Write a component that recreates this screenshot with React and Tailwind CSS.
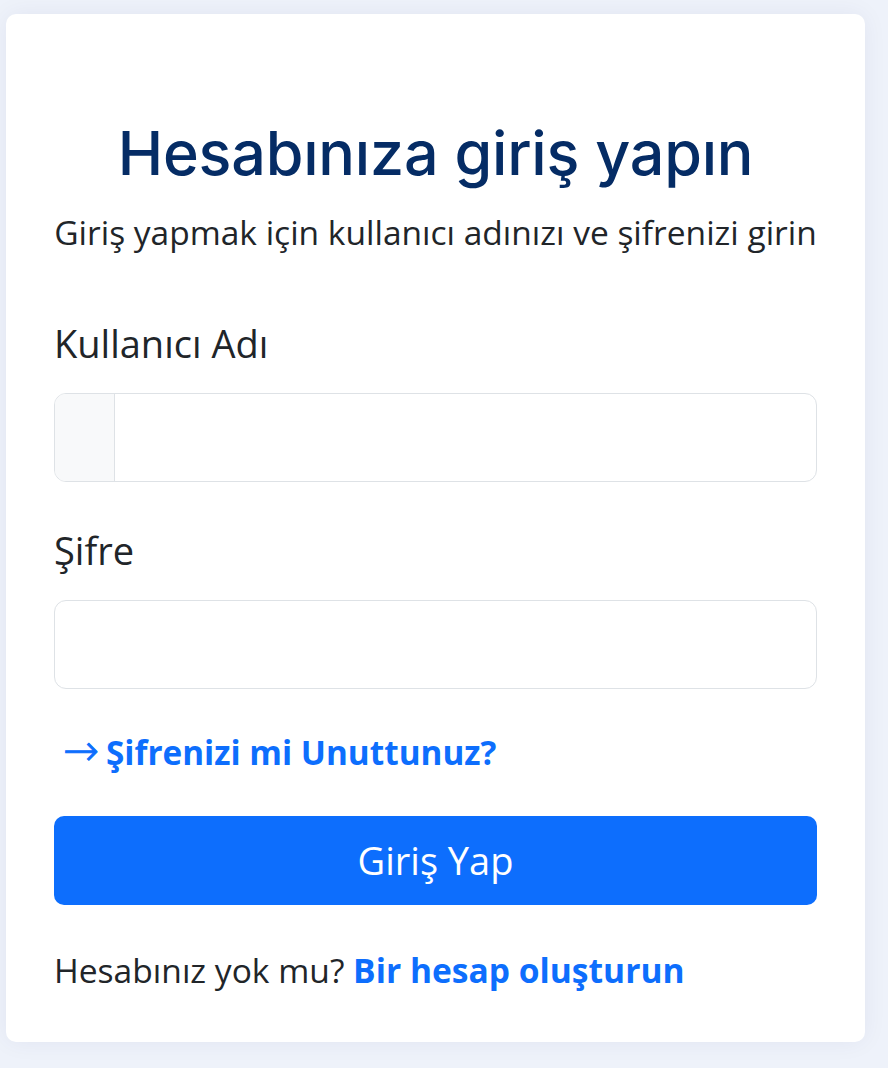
export default function App() {
  return (
    <div className="min-h-[1068px] w-full bg-[#eef2fa] pt-[14px] pl-[6px] pr-[23px] pb-[26px]" style={{ fontFamily: '"Open Sans", "Noto Sans", sans-serif' }}>
      <div className="w-[859px] rounded-[10px] bg-white shadow-[0_0_24px_rgba(20,40,100,0.06)] px-[48px] pt-[103px] pb-[47px]">
        <h1 className="text-center text-[#052c65] font-medium text-[61px] leading-[73px] tracking-[-0.2px]" style={{ fontFamily: 'Inter, "Noto Sans", sans-serif' }}>
          Hesabınıza giriş yapın
        </h1>
        <p className="mt-[17px] text-center text-[#212529] text-[33.5px] leading-[50px] whitespace-nowrap">
          Giriş yapmak için kullanıcı adınızı ve şifrenizi girin
        </p>
        <label className="block mt-[58px] text-[#212529] text-[38px] leading-[57px]">Kullanıcı Adı</label>
        <div className="mt-[21px] flex h-[89px] rounded-[12px] border-[1.5px] border-[#dee2e6] overflow-hidden">
          <div className="w-[60px] bg-[#f8f9fa] border-r-[1.5px] border-[#dee2e6]"></div>
          <input className="flex-1 outline-none px-4 text-[33px]" />
        </div>
        <label className="block mt-[40px] text-[#212529] text-[38px] leading-[57px]">Şifre</label>
        <div className="mt-[21px] h-[89px] rounded-[12px] border-[1.5px] border-[#dee2e6]">
          <input type="password" className="w-full h-full bg-transparent outline-none px-4 text-[33px]" />
        </div>
        <div className="mt-[38px] pl-[9px] text-[#0d6efd] font-bold text-[33.3px] leading-[50px] whitespace-nowrap">
          <span className="font-extralight text-[43px] leading-[43px] mr-[7px] [-webkit-text-stroke:0.9px_#0d6efd]" style={{ fontFamily: '"DejaVu Sans", sans-serif' }}>→</span>
          <span>Şifrenizi mi Unuttunuz?</span>
        </div>
        <button className="mt-[39px] w-full h-[89px] rounded-[10px] bg-[#0d6efd] text-white text-[38px] leading-[57px]">
          Giriş Yap
        </button>
        <p className="mt-[40px] text-[#212529] text-[33.6px] leading-[50px]">
          Hesabınız yok mu? <span className="text-[#0d6efd] font-bold">Bir hesap oluşturun</span>
        </p>
      </div>
    </div>
  );
}
